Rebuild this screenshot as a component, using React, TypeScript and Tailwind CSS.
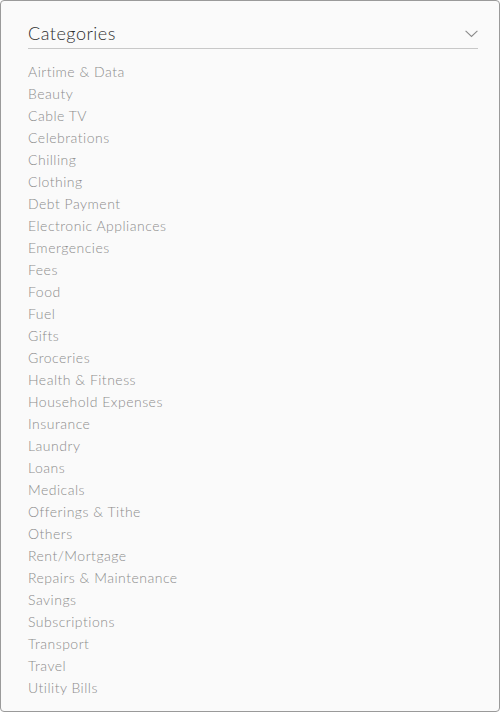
import React from "react";

const items = [
  "Airtime & Data",
  "Beauty",
  "Cable TV",
  "Celebrations",
  "Chilling",
  "Clothing",
  "Debt Payment",
  "Electronic Appliances",
  "Emergencies",
  "Fees",
  "Food",
  "Fuel",
  "Gifts",
  "Groceries",
  "Health & Fitness",
  "Household Expenses",
  "Insurance",
  "Laundry",
  "Loans",
  "Medicals",
  "Offerings & Tithe",
  "Others",
  "Rent/Mortgage",
  "Repairs & Maintenance",
  "Savings",
  "Subscriptions",
  "Transport",
  "Travel",
  "Utility Bills",
];

export default function App() {
  return (
    <div
      className="w-[500px] h-[712px] bg-white"
      style={{ fontFamily: "Lato, 'Noto Sans', sans-serif" }}
    >
      <div className="w-full h-full border border-[#9a9a9a] rounded-[4px] bg-[#fafafa] pl-[27px] pr-[21px] pt-[20px]">
        <div className="flex items-center justify-between h-[28px] border-b border-[#c8c8c8]">
          <span className="text-[18px] leading-[24px] text-[#2e2e2e] font-light tracking-[0.5px] -mt-[3px]">Categories</span>
          <svg width="13" height="8" viewBox="0 0 13 8" className="mb-[2px]">
            <path d="M0.6 0.8 L6.5 6.4 L12.4 0.8" fill="none" stroke="#8a8a8a" strokeWidth="1.1" />
          </svg>
        </div>
        <ul className="mt-[12px] flex flex-col">
          {items.map((it) => (
            <li key={it} className="text-[14px] leading-[22px] text-[#8c8c8c] font-light tracking-[0.5px]">
              {it}
            </li>
          ))}
        </ul>
      </div>
    </div>
  );
}
